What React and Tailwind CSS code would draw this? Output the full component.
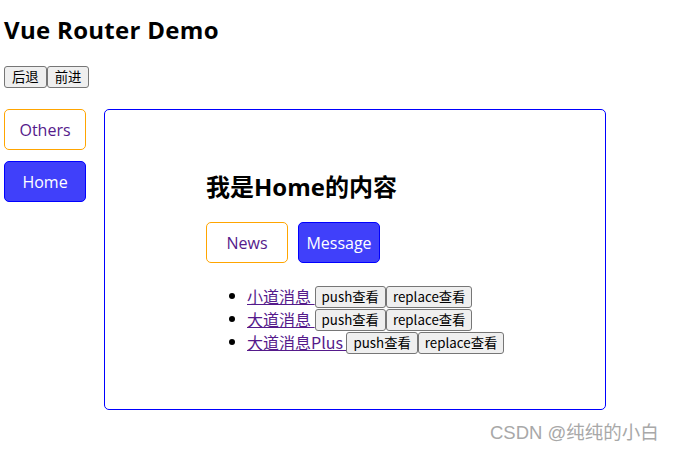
import React from "react";

const btn =
  "h-[22px] px-[6px] border border-[#767676] bg-[#efefef] rounded-[3px] text-[13.33px] leading-[20px] text-black align-middle font-['Noto_Sans_CJK_SC',sans-serif]";

function Item({ title }) {
  return (
    <li className="h-[23px] leading-[23px]">
      <a href="#" className="text-[#551a8b] underline text-[16px] leading-[23px] whitespace-pre font-['Noto_Sans_CJK_SC',sans-serif] align-middle">
        {title + " "}
      </a>
      <button className={btn}>push查看</button>
      <button className={btn}>replace查看</button>
    </li>
  );
}

export default function App() {
  return (
    <div className="relative w-[674px] h-[451px] bg-white overflow-hidden font-['Open_Sans','Noto_Sans_CJK_SC',sans-serif] text-black">
      <div className="pl-[4px]">
        <h2 className="pt-[16px] text-[24px] font-bold leading-[28px] tracking-[0.3px]">Vue Router Demo</h2>
        <div className="mt-[22px] flex">
          <button className={btn + " px-[7px]"}>后退</button>
          <button className={btn + " px-[7px]"}>前进</button>
        </div>
        <div className="mt-[21px] flex gap-[18px]">
          <div className="w-[82px] flex flex-col gap-[11px]">
            <a className="h-[41px] flex items-center justify-center border border-[orange] rounded-[5px] text-[16px] text-[#551a8b]">
              Others
            </a>
            <a className="h-[41px] flex items-center justify-center border border-[blue] rounded-[5px] bg-[#4040fa] text-[16px] text-white">
              Home
            </a>
          </div>
          <div className="w-[502px] h-[301px] border border-[blue] rounded-[5px] pl-[101px] pt-[62px]">
            <h2 className="text-[24px] font-bold leading-[30px]">我是Home的内容</h2>
            <div className="mt-[20px] flex gap-[10px]">
              <a className="w-[82px] h-[41px] flex items-center justify-center border border-[orange] rounded-[5px] text-[16px] text-[#551a8b]">
                News
              </a>
              <a className="w-[82px] h-[41px] flex items-center justify-center border border-[blue] rounded-[5px] bg-[#4040fa] text-[16px] text-white">
                Message
              </a>
            </div>
            <ul className="mt-[21px] pl-[41px] list-disc">
              <Item title="小道消息" />
              <Item title="大道消息" />
              <Item title="大道消息Plus" />
            </ul>
          </div>
        </div>
      </div>
      <div className="absolute left-[490px] top-[421px] text-[18.5px] leading-[24px] text-[#a8a8a8] font-['Liberation_Sans','Noto_Sans_CJK_SC',sans-serif]">
        CSDN @纯纯的小白
      </div>
    </div>
  );
}
